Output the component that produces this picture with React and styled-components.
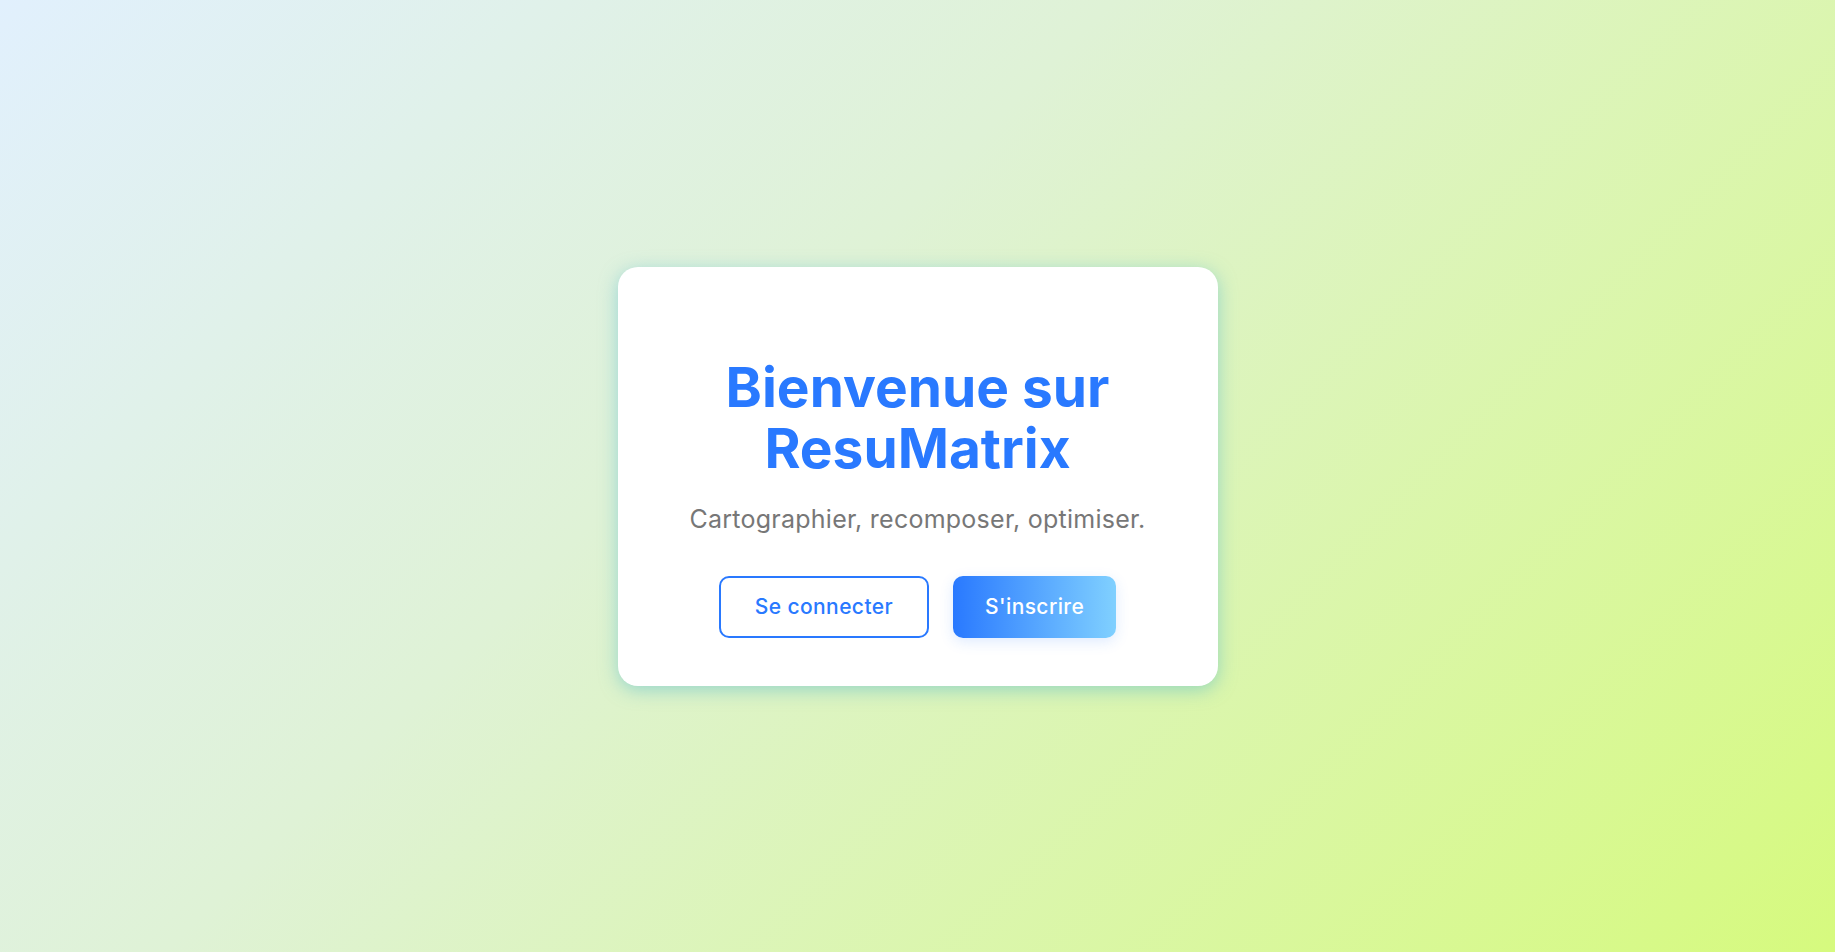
import styled, { createGlobalStyle } from 'styled-components';

const GlobalStyle = createGlobalStyle`
  html, body {
    margin: 0;
    padding: 0;
  }
  body {
    font-family: Inter, 'Noto Sans', sans-serif;
  }
  * {
    box-sizing: border-box;
  }
`;

const Page = styled.main`
  min-height: 100vh;
  display: flex;
  align-items: center;
  justify-content: center;
  background: linear-gradient(135deg, #e1f0fd 0%, #dff2d6 40%, #d6fa7e 100%);
`;

const Card = styled.section`
  width: 600px;
  padding: 90px 48px 48px;
  background: #ffffff;
  border-radius: 20px;
  box-shadow: 0 4px 18px rgba(80, 185, 205, 0.5);
  text-align: center;
`;

const Title = styled.h1`
  margin: 0;
  color: #2979ff;
  font-size: 55px;
  font-weight: 700;
  line-height: 61px;
`;

const Subtitle = styled.p`
  margin: 25px 0 42px;
  color: #777777;
  font-size: 25px;
  font-weight: 400;
  line-height: 30px;
  letter-spacing: 0.25px;
`;

const Actions = styled.div`
  display: flex;
  justify-content: center;
  gap: 24px;
`;

const Button = styled.button`
  height: 62px;
  padding: 0 ${(p) => (p.$primary ? '30px' : '34px')};
  border-radius: 10px;
  font-family: inherit;
  font-size: 21px;
  font-weight: 500;
  letter-spacing: 0.4px;
  cursor: pointer;
  border: 2px solid ${(p) => (p.$primary ? 'transparent' : '#2979ff')};
  color: ${(p) => (p.$primary ? '#ffffff' : '#2979ff')};
  background: ${(p) =>
    p.$primary ? 'linear-gradient(90deg, #2979ff 0%, #80d0ff 100%) border-box' : '#ffffff'};
  box-shadow: ${(p) =>
    p.$primary ? '0 4px 14px rgba(41, 121, 255, 0.15)' : 'none'};
`;

export default function App() {
  return (
    <Page>
      <GlobalStyle />
      <Card>
        <Title>
          Bienvenue sur
          <br />
          ResuMatrix
        </Title>
        <Subtitle>Cartographier, recomposer, optimiser.</Subtitle>
        <Actions>
          <Button>Se connecter</Button>
          <Button $primary>S'inscrire</Button>
        </Actions>
      </Card>
    </Page>
  );
}
